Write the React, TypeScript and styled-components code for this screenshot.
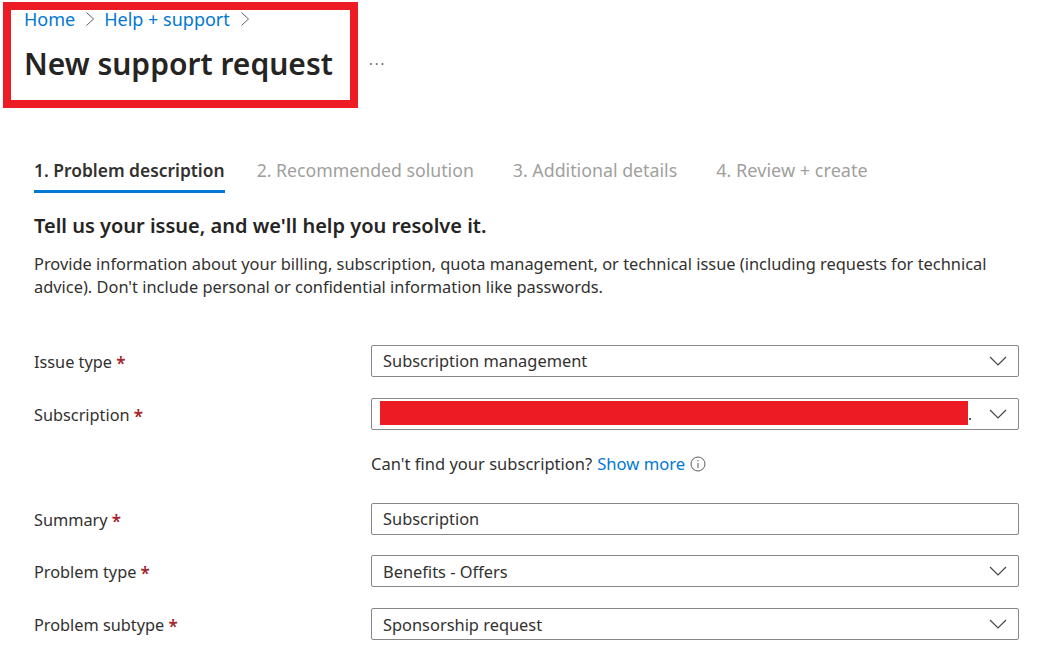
import styled, { createGlobalStyle } from 'styled-components';

const GlobalStyle = createGlobalStyle`
  html, body {
    margin: 0;
    padding: 0;
    background: #fff;
    overflow: hidden;
  }
  body {
    font-family: "Noto Sans", "Open Sans", sans-serif;
    color: #323130;
  }
`;

const Page = styled.div`
  width: 1045px;
  height: 655px;
  overflow: hidden;
  padding: 2px 0 0 3px;
  box-sizing: border-box;
`;

const Header = styled.header`
  display: flex;
  align-items: center;
`;

const RedactBox = styled.div`
  width: 355px;
  height: 106px;
  box-sizing: border-box;
  border: 8px solid #ed1c24;
  padding: 0 0 0 13px;
`;

const Crumbs = styled.nav`
  display: flex;
  align-items: center;
  height: 17px;
  font-size: 18px;
  color: #0078d4;
`;

const CrumbSep = styled.svg`
  width: 10px;
  height: 16px;
  margin: 0 9px 0 10px;
  fill: none;
  stroke: #605e5c;
  stroke-width: 1;
`;

const Title = styled.h1`
  margin: 15px 0 0;
  font-size: 30px;
  line-height: 44px;
  font-weight: 600;
  color: #252423;
  white-space: nowrap;
`;

const More = styled.span`
  margin: 8px 0 0 11px;
  font-size: 14px;
  letter-spacing: 2px;
  color: #605e5c;
`;

const Content = styled.main`
  padding: 50px 26px 0 31px;
`;

const Tabs = styled.div`
  display: flex;
  gap: 39px;
`;

const Tab = styled.div<{ $active?: boolean; $size?: number }>`
  height: 31px;
  padding-top: 1px;
  line-height: 23px;
  box-sizing: content-box;
  font-size: ${({ $active, $size }) => ($active ? 17.4 : $size ?? 17.7)}px;
  white-space: nowrap;
  font-weight: ${({ $active }) => ($active ? 600 : 400)};
  color: ${({ $active }) => ($active ? '#323130' : '#a19f9d')};
  border-bottom: 3px solid ${({ $active }) => ($active ? '#0078d4' : 'transparent')};
  margin-right: ${({ $active }) => ($active ? '-7px' : '0')};
`;

const Heading = styled.h2`
  margin: 19px 0 0;
  font-size: 20px;
  line-height: 28px;
  font-weight: 600;
  color: #252423;
`;

const Intro = styled.p`
  margin: 12px 0 0;
  font-size: 16.4px;
  line-height: 23px;
  color: #323130;
`;

const Form = styled.div`
  margin-top: 47px;
  display: flex;
  flex-direction: column;
`;

const Row = styled.div<{ $gap: number }>`
  display: grid;
  grid-template-columns: 337px 648px;
  align-items: center;
  margin-bottom: ${({ $gap }) => $gap}px;
`;

const Label = styled.label`
  font-size: 16.3px;
  line-height: 21px;
  margin-top: 2px;
`;

const Star = styled.span`
  color: #a4262c;
  font-size: 17px;
  font-weight: 600;
  line-height: 16px;
  vertical-align: -2px;
`;

const Field = styled.div<{ $lift?: boolean }>`
  position: relative;
  display: flex;
  align-items: center;
  justify-content: space-between;
  box-sizing: border-box;
  height: 32px;
  padding: 0 11px ${({ $lift }) => ($lift ? '1px' : '0')} 11px;
  border: 1px solid #8a8886;
  border-radius: 2px;
  font-size: 16.4px;
  color: #323130;
`;

const Redaction = styled.div`
  position: absolute;
  left: 8px;
  top: 2px;
  width: 588px;
  height: 24px;
  background: #ed1c24;
`;

const RedactionTail = styled.div`
  position: absolute;
  left: 597px;
  top: 19px;
  width: 2px;
  height: 2px;
  background: #2b6f80;
`;

const Chevron = styled.svg`
  width: 18px;
  height: 10px;
  margin-left: auto;
  fill: none;
  stroke: #484644;
  stroke-width: 1.2;
`;

const Helper = styled.div`
  grid-column: 2;
  display: flex;
  align-items: center;
  height: 23px;
  font-size: 16.55px;
  white-space: nowrap;
`;

const HelpLink = styled.span`
  color: #0078d4;
  font-size: 16.6px;
  margin-left: 5px;
`;

const InfoIcon = styled.svg`
  width: 16px;
  height: 16px;
  margin-left: 5px;
  fill: none;
  stroke: #605e5c;
`;

const CrumbArrow = () => (
  <CrumbSep viewBox="0 0 10 16">
    <path d="M1.5 1.5 L8.5 8 L1.5 14.5" />
  </CrumbSep>
);

const ChevronDown = () => (
  <Chevron viewBox="0 0 18 10">
    <path d="M1 1 L9 9 L17 1" />
  </Chevron>
);

type FieldRow = {
  label: string;
  value?: string;
  chevron: boolean;
  redacted?: boolean;
  lift?: boolean;
  gap: number;
};

const TOP_ROWS: FieldRow[] = [
  { label: 'Issue type', value: 'Subscription management', chevron: true, lift: true, gap: 21 },
  { label: 'Subscription', chevron: true, redacted: true, gap: 22 },
];

const BOTTOM_ROWS: FieldRow[] = [
  { label: 'Summary', value: 'Subscription', chevron: false, lift: true, gap: 20 },
  { label: 'Problem type', value: 'Benefits - Offers', chevron: true, gap: 21 },
  { label: 'Problem subtype', value: 'Sponsorship request', chevron: true, gap: 0 },
];

const renderRow = (row: FieldRow) => (
  <Row key={row.label} $gap={row.gap}>
    <Label>
      {row.label} <Star>*</Star>
    </Label>
    <Field $lift={row.lift}>
      {row.value}
      {row.redacted && <Redaction />}
      {row.redacted && <RedactionTail />}
      {row.chevron && <ChevronDown />}
    </Field>
  </Row>
);

export default function App() {
  return (
    <Page>
      <GlobalStyle />
      <Header>
        <RedactBox>
          <Crumbs>
            Home
            <CrumbArrow />
            Help + support
            <CrumbArrow />
          </Crumbs>
          <Title>New support request</Title>
        </RedactBox>
        <More>...</More>
      </Header>
      <Content>
        <Tabs>
          <Tab $active>1. Problem description</Tab>
          <Tab>2. Recommended solution</Tab>
          <Tab $size={17.8}>3. Additional details</Tab>
          <Tab $size={18.1}>4. Review + create</Tab>
        </Tabs>
        <Heading>Tell us your issue, and we'll help you resolve it.</Heading>
        <Intro>
          Provide information about your billing, subscription, quota management, or technical issue (including requests for technical
          advice). Don't include personal or confidential information like passwords.
        </Intro>
        <Form>
          {TOP_ROWS.map(renderRow)}
          <Row $gap={28}>
            <Helper>
              Can't find your subscription?
              <HelpLink>Show more</HelpLink>
              <InfoIcon viewBox="0 0 16 16">
                <circle cx="8" cy="8" r="7" />
                <path d="M8 7 V12 M8 4 V5.4" />
              </InfoIcon>
            </Helper>
          </Row>
          {BOTTOM_ROWS.map(renderRow)}
        </Form>
      </Content>
    </Page>
  );
}
